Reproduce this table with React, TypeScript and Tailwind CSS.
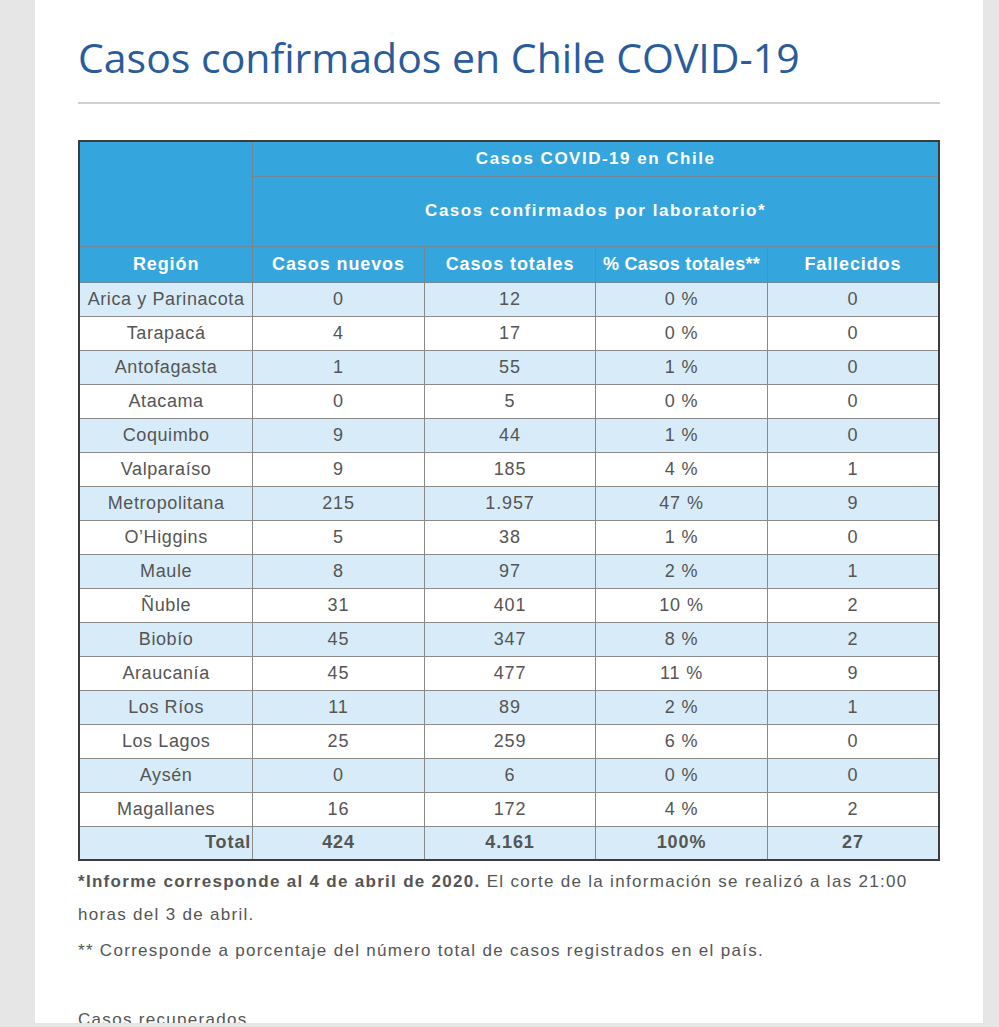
import React from "react";

type Row = [string, string, string, string, string];

const rows: Row[] = [
  ["Arica y Parinacota", "0", "12", "0 %", "0"],
  ["Tarapacá", "4", "17", "0 %", "0"],
  ["Antofagasta", "1", "55", "1 %", "0"],
  ["Atacama", "0", "5", "0 %", "0"],
  ["Coquimbo", "9", "44", "1 %", "0"],
  ["Valparaíso", "9", "185", "4 %", "1"],
  ["Metropolitana", "215", "1.957", "47 %", "9"],
  ["O’Higgins", "5", "38", "1 %", "0"],
  ["Maule", "8", "97", "2 %", "1"],
  ["Ñuble", "31", "401", "10 %", "2"],
  ["Biobío", "45", "347", "8 %", "2"],
  ["Araucanía", "45", "477", "11 %", "9"],
  ["Los Ríos", "11", "89", "2 %", "1"],
  ["Los Lagos", "25", "259", "6 %", "0"],
  ["Aysén", "0", "6", "0 %", "0"],
  ["Magallanes", "16", "172", "4 %", "2"],
];

const th = "border border-[#6f8797] text-white font-bold text-center p-0";
const td = "border border-[#8a8a8a] text-center h-[34px] p-0";

const App = () => {
  return (
    <div className="min-h-[1027px] bg-[#e6e6e6] flex flex-col">
      <div className="ml-[35px] mr-[16px] bg-white h-[1023px] overflow-hidden px-[43px] pt-[31px]">
        <h1
          className="text-[#2a5c9b] text-[41px] leading-[52px]"
          style={{ fontFamily: "'Open Sans', 'Noto Sans', sans-serif" }}
        >
          Casos confirmados en Chile COVID-19
        </h1>
        <div className="mt-[19px] h-[2px] bg-[#d0d0d0] w-[862px]" />
        <table
          className="mt-[36px] w-[862px] border-collapse border-2 border-[#3c3c3c] text-[18px] tracking-[0.9px] text-[#555]"
          style={{ fontFamily: "'Liberation Sans', Arial, sans-serif" }}
        >
          <colgroup>
            <col className="w-[174px]" />
            <col className="w-[172px]" />
            <col className="w-[172px]" />
            <col className="w-[172px]" />
            <col className="w-[172px]" />
          </colgroup>
          <thead className="bg-[#35a5de]">
            <tr className="h-[35px]">
              <th rowSpan={2} className={th}></th>
              <th colSpan={4} className={th + " text-[17px] tracking-[1.5px]"}>
                Casos COVID-19 en Chile
              </th>
            </tr>
            <tr className="h-[70px]">
              <th colSpan={4} className={th + " text-[17px] tracking-[1.5px]"}>
                Casos confirmados por laboratorio*
              </th>
            </tr>
            <tr className="h-[36px]">
              <th className={th}>Región</th>
              <th className={th}>Casos nuevos</th>
              <th className={th}>Casos totales</th>
              <th className={th + " tracking-[0.3px]"}>% Casos totales**</th>
              <th className={th}>Fallecidos</th>
            </tr>
          </thead>
          <tbody>
            {rows.map((r, i) => (
              <tr key={r[0]} className={i % 2 === 0 ? "bg-[#d7ecf8]" : "bg-white"}>
                {r.map((c, j) => (
                  <td key={j} className={td + (j === 0 ? " tracking-[0.6px]" : "")}>
                    {c}
                  </td>
                ))}
              </tr>
            ))}
            <tr className="bg-[#d7ecf8] font-bold">
              <td className={td + " !text-right pr-[1px]"}>Total</td>
              <td className={td}>424</td>
              <td className={td}>4.161</td>
              <td className={td}>100%</td>
              <td className={td}>27</td>
            </tr>
          </tbody>
        </table>
        <div
          className="text-[17px] text-[#555] tracking-[1.3px] leading-[33px] mt-[4px] w-[862px]"
          style={{ fontFamily: "'Liberation Sans', Arial, sans-serif" }}
        >
          <p>
            <span className="font-bold">*Informe corresponde al 4 de abril de 2020.</span> El corte de la
            información se realizó a las 21:00 horas del 3 de abril.
          </p>
          <p className="mt-[3px]">** Corresponde a porcentaje del número total de casos registrados en el país.</p>
          <p className="mt-[36px]">Casos recuperados</p>
        </div>
      </div>
    </div>
  );
};

export default App;
